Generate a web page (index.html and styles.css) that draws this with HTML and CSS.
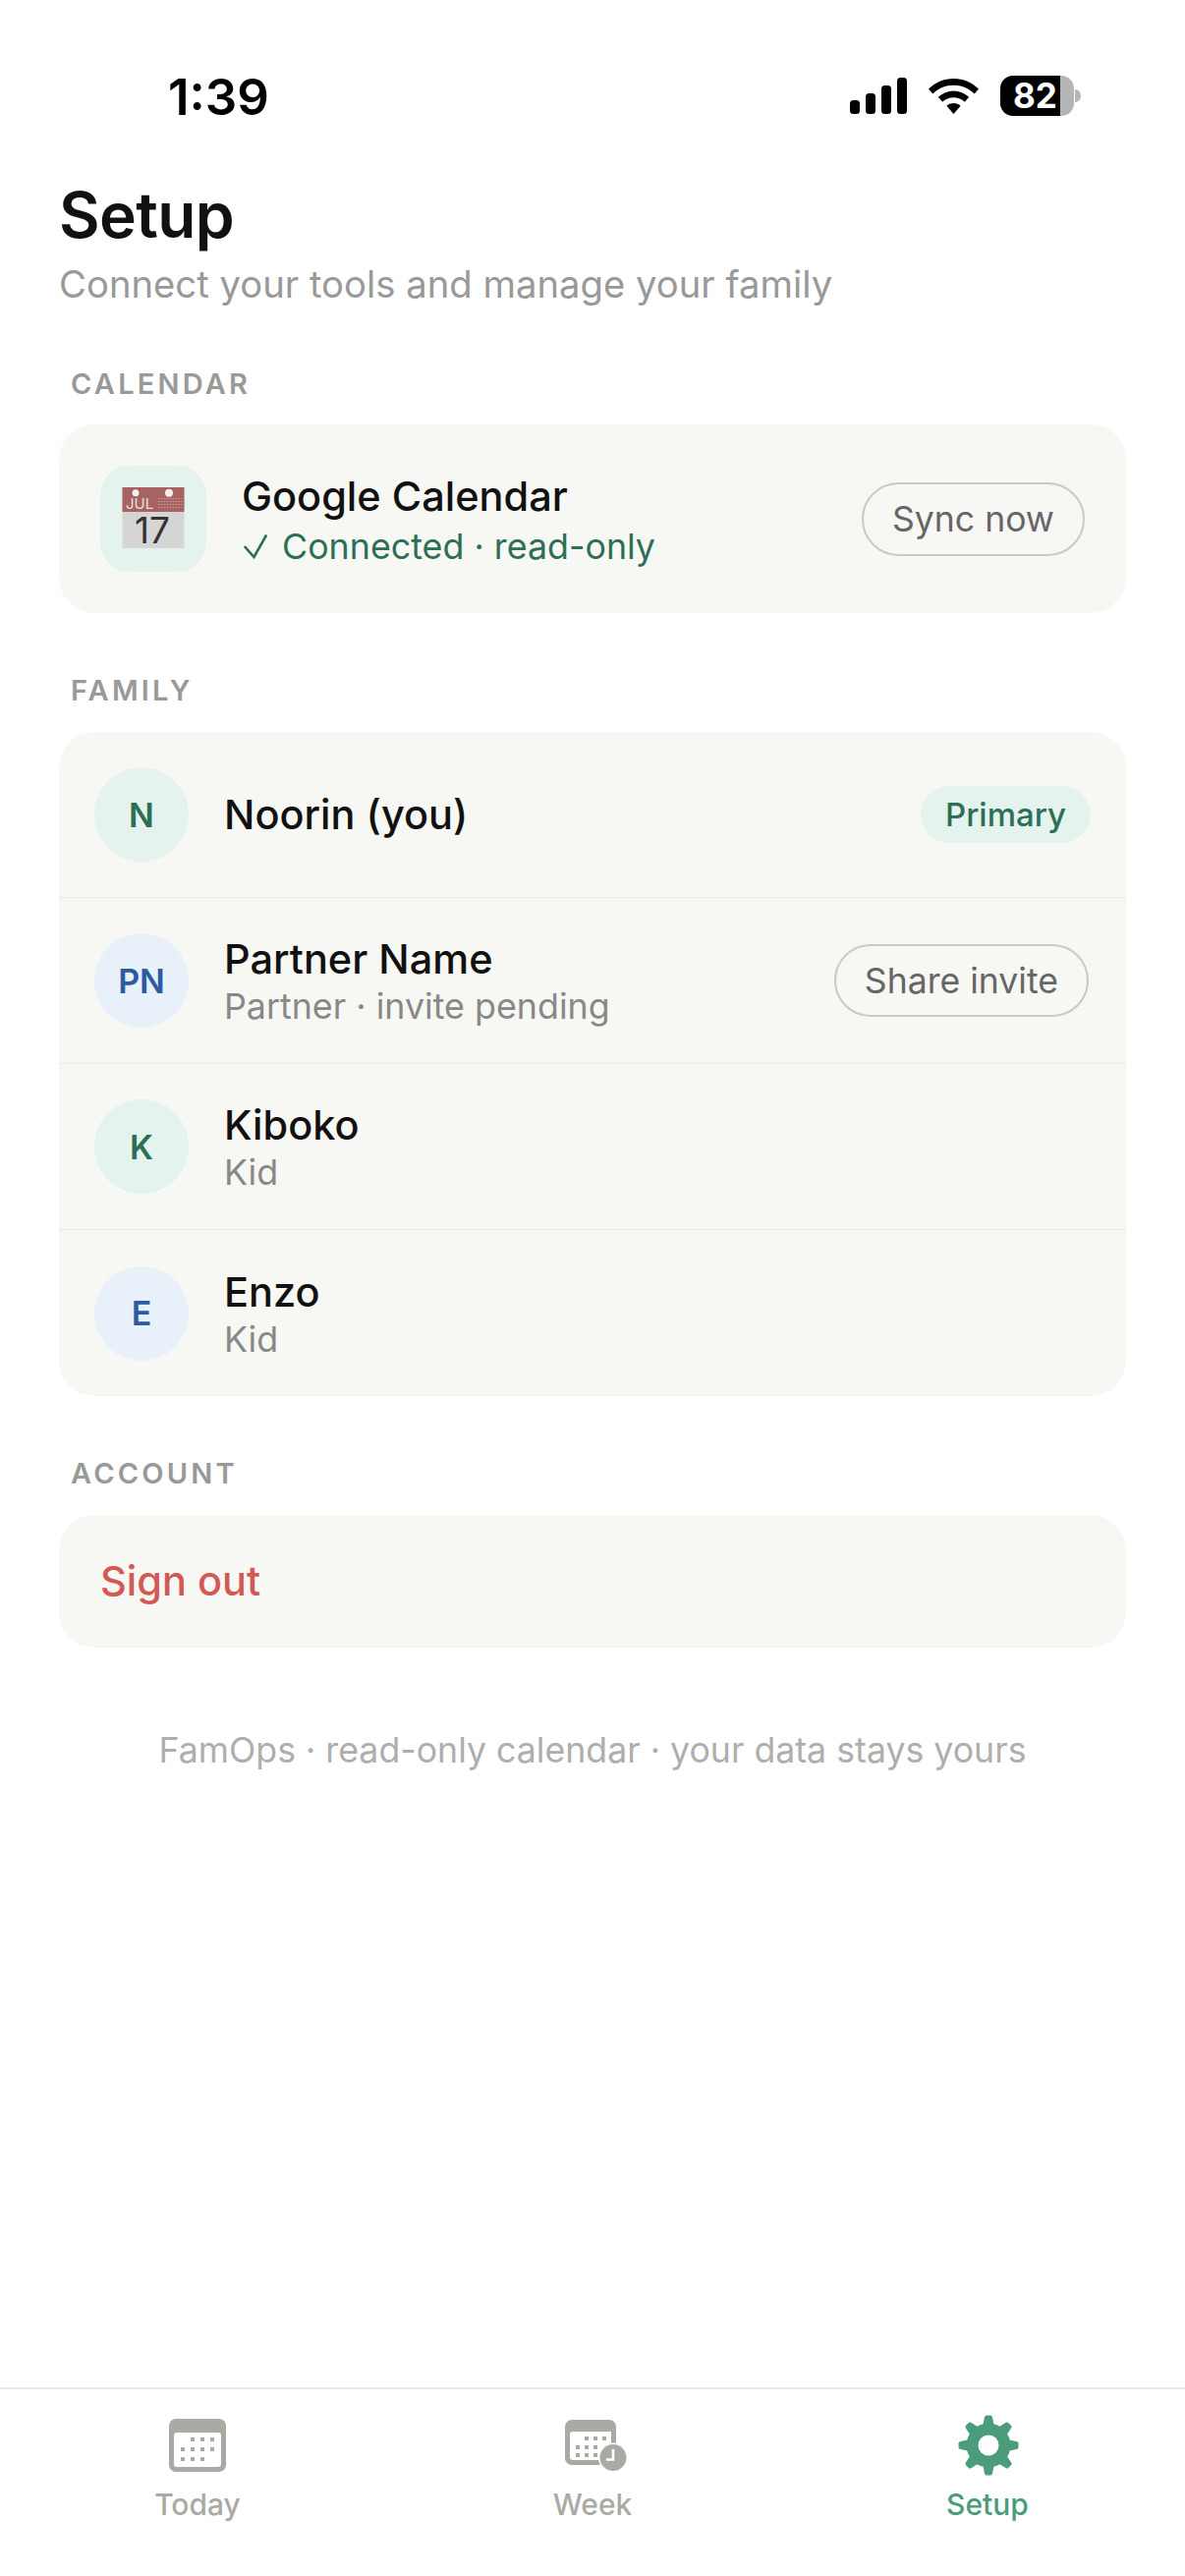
FILE: index.html
```html
<!DOCTYPE html>
<html>
<head>
<link rel="stylesheet" href="styles.css">
</head>
<body>
  <div id="screen">
    <div class="status-bar">
      <span class="time">1:39</span>
      <div class="status-icons">
        <svg class="signal" width="58" height="37" viewBox="0 0 58 37">
          <rect x="0" y="23" width="10" height="14" rx="3.5"/>
          <rect x="16" y="16" width="10" height="21" rx="3.5"/>
          <rect x="32" y="8" width="10" height="29" rx="3.5"/>
          <rect x="48" y="0" width="10" height="37" rx="3.5"/>
        </svg>
        <svg class="wifi" width="51" height="36" viewBox="0 0 51 36">
          <path d="M25.5 0C15.6 0 7 3.900 0 10.500L4.300 15.400C10 10 17.200 6.800 25.500 6.800S41 10 46.700 15.400L51 10.500C44 3.900 35.400 0 25.500 0Z"/>
          <path d="M25.500 12.500C19.500 12.500 14.200 14.800 9.800 18.800L14.200 23.700C17.300 20.900 21.100 19.200 25.500 19.200S33.700 20.900 36.800 23.700L41.200 18.800C36.800 14.800 31.500 12.500 25.500 12.500Z"/>
          <path d="M25.500 25C22.800 25 20.300 26 18.400 27.800L25.500 36L32.600 27.800C30.700 26 28.200 25 25.500 25Z"/>
        </svg>
        <div class="battery">
          <div class="battery-body"><span>82</span></div>
          <div class="battery-nib"></div>
        </div>
      </div>
    </div>

    <div class="content">
      <h1 class="title">Setup</h1>
      <p class="subtitle">Connect your tools and manage your family</p>

      <div class="section-label">CALENDAR</div>
      <div class="card calendar-card">
        <div class="cal-icon">
          <svg width="64" height="68" viewBox="0 0 64 68">
            <rect x="0.500" y="0" width="63" height="62" fill="#d6d5d5"/>
            <rect x="0.500" y="0" width="63" height="25" fill="#a66362"/>
            <circle cx="14" cy="5.700" r="3.500" fill="#f3f0ee"/>
            <circle cx="48" cy="5.700" r="4" fill="#f3f0ee"/>
            <text x="4" y="22" class="cal-month">JUL</text>
            <path d="M37 11.500h24M37 14.500h24M37 17.500h24M37 20.500h24" stroke="#cfa9a8" stroke-width="1.200" stroke-dasharray="1.300 1.600"/>
            <text x="31" y="57" class="cal-day">17</text>
          </svg>
        </div>
        <div class="row-text linked">
          <div class="name">Google Calendar</div>
          <div class="connected">
            <svg class="tick" width="24" height="26" viewBox="0 0 24 26"><path d="M0.800 13L10.500 24L23.200 1.500"/></svg>
            <span>Connected · read-only</span>
          </div>
        </div>
        <button class="pill-btn">Sync now</button>
      </div>

      <div class="section-label">FAMILY</div>
      <div class="card family-card">
        <div class="row">
          <div class="avatar green">N</div>
          <div class="row-text"><div class="name">Noorin (you)</div></div>
          <span class="badge">Primary</span>
        </div>
        <div class="row">
          <div class="avatar blue">PN</div>
          <div class="row-text stacked">
            <div class="name">Partner Name</div>
            <div class="sub">Partner · invite pending</div>
          </div>
          <button class="pill-btn invite-btn">Share invite</button>
        </div>
        <div class="row">
          <div class="avatar green">K</div>
          <div class="row-text stacked">
            <div class="name">Kiboko</div>
            <div class="sub">Kid</div>
          </div>
        </div>
        <div class="row">
          <div class="avatar blue">E</div>
          <div class="row-text stacked">
            <div class="name">Enzo</div>
            <div class="sub">Kid</div>
          </div>
        </div>
      </div>

      <div class="section-label">ACCOUNT</div>
      <div class="card signout-card">Sign out</div>

      <p class="footer-note">FamOps · read-only calendar · your data stays yours</p>
    </div>

    <div class="tab-bar">
      <div class="tab">
        <div class="tab-icon">
          <svg width="58" height="54" viewBox="0 0 58 54">
            <rect width="58" height="54" rx="7" fill="#aaaaa5"/>
            <rect x="5" y="14" width="48" height="35" rx="3" fill="#fff"/>
            <g fill="#aaaaa5">
              <rect x="22" y="19" width="4" height="4"/><rect x="32" y="19" width="4" height="4"/><rect x="42" y="19" width="4" height="4"/>
              <rect x="12" y="29" width="4" height="4"/><rect x="22" y="29" width="4" height="4"/><rect x="32" y="29" width="4" height="4"/><rect x="42" y="29" width="4" height="4"/>
              <rect x="12" y="39" width="4" height="4"/><rect x="22" y="39" width="4" height="4"/><rect x="32" y="39" width="4" height="4"/>
            </g>
          </svg>
        </div>
        <span class="tab-label">Today</span>
      </div>
      <div class="tab">
        <div class="tab-icon week-icon">
          <svg width="63" height="52" viewBox="0 0 63 52">
            <path d="M7 0H45A7 7 0 0 1 52 7V26H36V46H7A7 7 0 0 1 0 39V7A7 7 0 0 1 7 0Z" fill="#aaaaa5"/>
            <path d="M8 12H47V28H36V41H8A3 3 0 0 1 5 38V15A3 3 0 0 1 8 12Z" fill="#fff"/>
            <g fill="#aaaaa5">
              <rect x="20" y="17" width="4" height="4"/><rect x="29" y="17" width="4" height="4"/><rect x="38" y="17" width="4" height="4"/>
              <rect x="11" y="26" width="4" height="4"/><rect x="20" y="26" width="4" height="4"/><rect x="29" y="26" width="4" height="4"/>
              <rect x="11" y="34" width="4" height="4"/><rect x="20" y="34" width="4" height="4"/><rect x="29" y="34" width="4" height="4"/>
            </g>
            <circle cx="49" cy="38.500" r="15" fill="#fff"/>
            <circle cx="49" cy="38.500" r="13.500" fill="#aaaaa5"/>
            <path d="M49 30V40.500H42" fill="none" stroke="#fff" stroke-width="2.600"/>
          </svg>
        </div>
        <span class="tab-label">Week</span>
      </div>
      <div class="tab active">
        <div class="tab-icon gear-icon">
          <svg width="62" height="62" viewBox="0 0 62 62">
            <defs>
              <path id="tooth" d="M25 12L27 2.500Q27.400 0.500 29 0.500H33Q34.600 0.500 35 2.500L37 12Z"/>
            </defs>
            <g fill="#4a9c7a">
              <circle cx="31" cy="31" r="22.500"/>
              <use href="#tooth"/>
              <use href="#tooth" transform="rotate(45 31 31)"/>
              <use href="#tooth" transform="rotate(90 31 31)"/>
              <use href="#tooth" transform="rotate(135 31 31)"/>
              <use href="#tooth" transform="rotate(180 31 31)"/>
              <use href="#tooth" transform="rotate(225 31 31)"/>
              <use href="#tooth" transform="rotate(270 31 31)"/>
              <use href="#tooth" transform="rotate(315 31 31)"/>
            </g>
            <circle cx="31" cy="31" r="10.500" fill="#fff"/>
          </svg>
        </div>
        <span class="tab-label">Setup</span>
      </div>
    </div>
  </div>
</body>
</html>
```

FILE: styles.css
```css
body {
  font-family: Inter, "Liberation Sans", sans-serif;
  background-color: #fff;
  margin: 0;
  padding: 0;
}

#screen {
  width: 1206px;
  height: 2622px;
  display: flex;
  flex-direction: column;
  overflow: hidden;
}

/* status bar */
.status-bar {
  height: 118px;
  padding: 0 106px 0 171px;
  display: flex;
  justify-content: space-between;
  align-items: flex-end;
  box-sizing: border-box;
}

.time {
  font-size: 51px;
  font-weight: 600;
  line-height: 60px;
  margin-bottom: -11px;
  color: #000;
}

.status-icons {
  display: flex;
  align-items: center;
  height: 41px;
}

.signal {
  margin-right: 22px;
}

.wifi {
  margin-right: 22px;
}

.battery {
  display: flex;
  align-items: center;
}

.battery-body {
  width: 75px;
  height: 41px;
  border-radius: 13px;
  background: linear-gradient(to right, #000 61px, #b5b5b5 61px);
  color: #fff;
  font-size: 35px;
  font-weight: 700;
  line-height: 40px;
  padding-left: 13px;
  box-sizing: border-box;
  white-space: nowrap;
}

.battery-nib {
  width: 6px;
  height: 13px;
  margin-left: 1px;
  background-color: #b5b5b5;
  border-radius: 0 6px 6px 0;
}

/* page */
.content {
  flex: 1;
  padding: 0 60px;
}

.title {
  margin: 65px 0 0;
  font-size: 64px;
  font-weight: 600;
  line-height: 72px;
  letter-spacing: -0.6px;
  color: #111;
}

.subtitle {
  margin: 9px 0 0;
  font-size: 38.25px;
  line-height: 50px;
  color: #999;
}

.section-label {
  margin: 61px 12px 0;
  padding-bottom: 24px;
  font-size: 29px;
  font-weight: 600;
  line-height: 36px;
  letter-spacing: 3.2px;
  color: #999;
}

.content .subtitle + .section-label {
  margin-top: 59px;
  padding-bottom: 23px;
}

.card {
  background-color: #f7f8f4;
  border-radius: 36px;
}

.calendar-card {
  display: flex;
  align-items: center;
  padding: 42px;
  height: 192px;
  box-sizing: border-box;
}

.cal-icon {
  width: 108px;
  height: 108px;
  margin-right: 36px;
  border-radius: 30px;
  background-color: #e5f3ee;
  display: flex;
  align-items: center;
  justify-content: center;
  flex-shrink: 0;
}

.cal-icon svg {
  margin-top: 4px;
}

.cal-month {
  font-size: 15px;
  fill: #efdfdd;
}

.cal-day {
  font-size: 37px;
  fill: #333;
  text-anchor: middle;
}

.row-text {
  flex: 1;
}

.row-text.linked {
  padding-top: 4px;
}

.row-text.stacked {
  padding-top: 2px;
}

.name {
  font-size: 41.5px;
  font-weight: 500;
  line-height: 50px;
  color: #111;
}

.sub {
  font-size: 35.8px;
  line-height: 46px;
  color: #888;
}

.connected {
  margin-top: 2px;
  padding-left: 2px;
  display: flex;
  align-items: center;
  font-size: 35.8px;
  line-height: 48px;
  color: #2d6e56;
}

.tick {
  margin-right: 15px;
  fill: none;
  stroke: #2d6e56;
  stroke-width: 2.600;
}

.pill-btn {
  height: 75px;
  padding: 0 29px;
  font-family: inherit;
  font-size: 35.6px;
  color: #666;
  background: none;
  border: 2px solid #c9c9c6;
  border-radius: 38px;
}

.invite-btn {
  height: 74px;
  margin-right: 2px;
}

.family-card {
  display: flex;
  flex-direction: column;
}

.row {
  display: flex;
  align-items: center;
  height: 169px;
  padding: 0 36px;
  box-sizing: border-box;
  border-bottom: 1px solid #e8e8e4;
}

.row:last-child {
  border-bottom: none;
}

.avatar {
  width: 96px;
  height: 96px;
  margin-right: 36px;
  border-radius: 50%;
  display: flex;
  align-items: center;
  justify-content: center;
  font-size: 34px;
  font-weight: 600;
  flex-shrink: 0;
}

.avatar.green {
  background-color: #e5f3ee;
  color: #2d6e56;
}

.avatar.blue {
  background-color: #e8f0fa;
  color: #2b5ca3;
}

.badge {
  height: 58px;
  padding: 0 25px;
  border-radius: 29px;
  background-color: #e5f3ee;
  color: #2d6e56;
  font-size: 33px;
  font-weight: 500;
  line-height: 58px;
}

.signout-card {
  height: 135px;
  padding: 0 42px;
  font-size: 41.5px;
  font-weight: 500;
  line-height: 134px;
  color: #d35a54;
}

.footer-note {
  margin: 81px 0 0;
  text-align: center;
  font-size: 35.7px;
  line-height: 46px;
  color: #aeaeae;
}

/* bottom tabs */
.tab-bar {
  height: 190px;
  border-top: 2px solid #ebebe8;
  display: flex;
}

.tab {
  flex: 1;
  display: flex;
  flex-direction: column;
  align-items: center;
  color: #aaaaa5;
}

.tab-icon {
  height: 62px;
  margin-top: 26px;
  display: flex;
  align-items: center;
}

.week-icon {
  margin-left: 6px;
}

.gear-icon {
  margin-left: 2px;
}

.tab-label {
  margin-top: 10px;
  font-size: 30px;
  font-weight: 500;
  line-height: 38px;
}

.tab.active {
  color: #4a9c7a;
}
```
